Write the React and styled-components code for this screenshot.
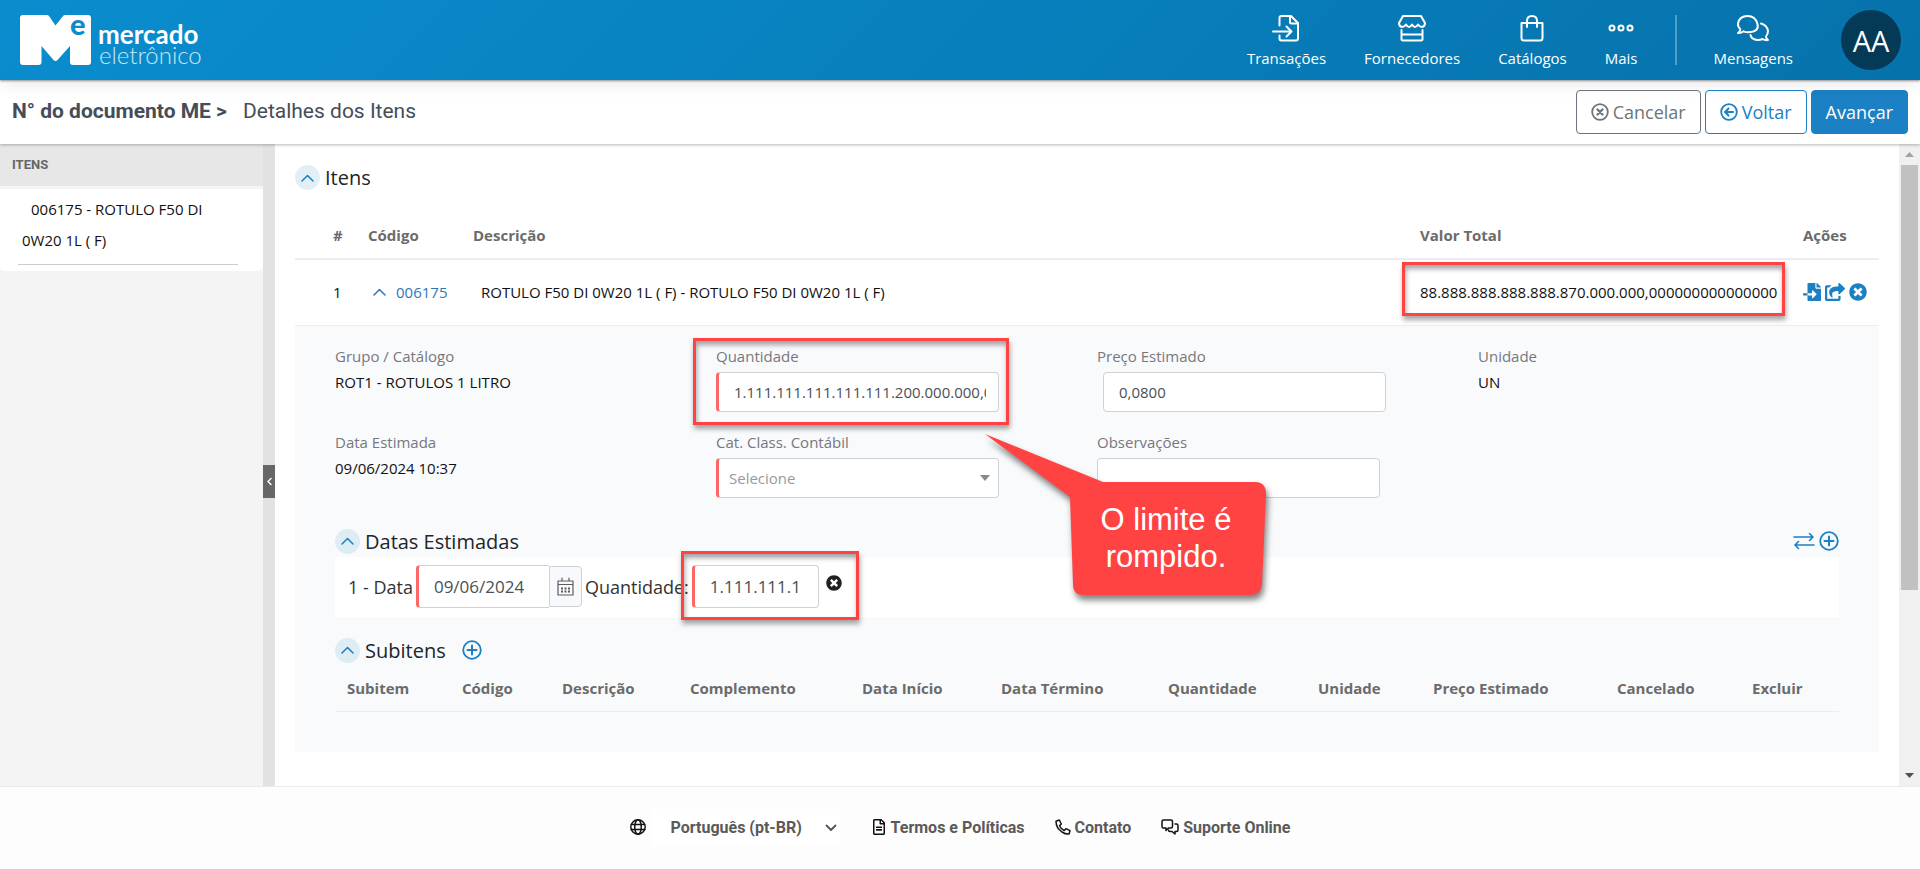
import React from "react";
import styled, { createGlobalStyle, css } from "styled-components";
import { FaFileImport, FaShareSquare, FaTimesCircle, FaRegFileAlt, FaChevronLeft } from "react-icons/fa";

const sans = '"Open Sans", "Noto Sans", sans-serif';
const roboto = 'Roboto, "Liberation Sans", sans-serif';
const blue = "#1b80c4";
const red = "#ff4343";

const GlobalStyle = createGlobalStyle`
  *, *::before, *::after { box-sizing: border-box; }
  body { margin: 0; font-family: ${sans}; font-size: 15px; color: #212529; background: #fff; }
  button, input, select { font-family: inherit; margin: 0; }
  svg { display: block; flex: none; }
`;

const Page = styled.div`
  min-height: 100vh;
  display: flex;
  flex-direction: column;
`;

/* ---------- Top bar ---------- */
const TopBar = styled.header`
  position: relative;
  z-index: 3;
  height: 80px;
  padding: 0 19px 0 20px;
  display: flex;
  align-items: center;
  justify-content: space-between;
  background: linear-gradient(135deg, #0a8dce, #0672ab);
  box-shadow: 0 1px 2px rgba(0, 0, 0, 0.4), 0 3px 16px rgba(0, 0, 0, 0.1);
`;
const Nav = styled.nav`
  display: flex;
  align-items: center;
  gap: 38px;
`;
const NavLink = styled.a`
  display: flex;
  flex-direction: column;
  align-items: center;
  gap: 6px;
  padding-top: 2px;
  color: #fff;
  font-size: 15px;
  line-height: 20px;
  text-decoration: none;
`;
const NavDivider = styled.span`
  width: 2px;
  height: 50px;
  margin-right: -2px;
  background: rgba(255, 255, 255, 0.3);
`;
const Avatar = styled.button`
  width: 60px;
  height: 60px;
  margin-left: 10px;
  padding: 0;
  border: 0;
  border-radius: 50%;
  background: #053a56;
  color: #fff;
  font-family: ${sans};
  font-size: 29px;
`;
const LogoSvg = styled.svg`
  overflow: visible;
  font-family: Lato, sans-serif;
`;

/* ---------- Title bar ---------- */
const TitleBar = styled.div`
  position: relative;
  z-index: 2;
  height: 64px;
  padding: 0 12px;
  display: flex;
  align-items: center;
  justify-content: space-between;
  background: #fff;
  box-shadow: 0 1px 3px rgba(0, 0, 0, 0.28);
`;
const Crumbs = styled.h1`
  margin: 0 0 2px;
  display: flex;
  gap: 16px;
  font: 400 21px/28px ${roboto};
  color: #454d59;
`;
const Actions = styled.div`
  display: flex;
  gap: 4px;
`;
const ActionButton = styled.button`
  height: 44px;
  padding: 0 14px;
  display: flex;
  align-items: center;
  gap: 4px;
  border: 1px solid ${(p) => p.$color};
  border-radius: 4px;
  background: ${(p) => (p.$filled ? p.$color : "#fff")};
  color: ${(p) => (p.$filled ? "#fff" : p.$color)};
  font-size: 18px;
`;

/* ---------- Body ---------- */
const Body = styled.div`
  flex: 1;
  display: flex;
`;
const Sidebar = styled.aside`
  width: 263px;
  background: #f4f4f4;
`;
const SideTitle = styled.h2`
  margin: 0 0 3px;
  padding: 0 12px;
  font: 700 13px/42px ${roboto};
  color: #666;
  background: #e7e7e7;
`;
const SideCard = styled.div`
  padding: 5px 25px 6px 18px;
  background: #fff;
  border-radius: 0 0 5px 5px;
`;
const SideLink = styled.a`
  display: block;
  padding: 0 4px 8px;
  border-bottom: 1px solid #ccc;
  color: #111;
  font-size: 15px;
  line-height: 31px;
  text-indent: 9px;
  text-decoration: none;
`;
const Splitter = styled.div`
  width: 12px;
  display: flex;
  align-items: center;
  background: #e2e2e2;
`;
const SplitterHandle = styled.button`
  width: 12px;
  height: 33px;
  margin-top: 32px;
  padding: 0;
  display: flex;
  align-items: center;
  justify-content: center;
  border: 0;
  background: #666;
  color: #fff;
`;
const Main = styled.main`
  flex: 1;
  min-width: 0;
  padding: 21px 20px 32px;
  background: #fff;
`;
const ScrollTrack = styled.div`
  width: 21px;
  display: flex;
  flex-direction: column;
  align-items: center;
  background: #f0f0f0;
`;
const ScrollArrow = styled.button`
  width: 18px;
  height: 21px;
  padding: 0;
  display: flex;
  align-items: center;
  justify-content: center;
  border: 0;
  background: none;
`;
const ScrollThumb = styled.div`
  width: 17px;
  flex: 424;
  background: #c1c1c1;
`;
const ScrollRest = styled.div`
  flex: 175;
`;

/* ---------- Sections ---------- */
const SectionHead = styled.div`
  height: 25px;
  display: flex;
  align-items: center;
  justify-content: space-between;
  margin: ${(p) => p.$m || "0"};
`;
const SectionTitle = styled.h3`
  margin: 0;
  display: flex;
  align-items: center;
  gap: 5px;
  font-size: 20px;
  font-weight: 400;
  line-height: 25px;
`;
const RoundToggle = styled.button`
  width: 25px;
  height: 25px;
  padding: 0;
  display: flex;
  align-items: center;
  justify-content: center;
  border: 0;
  border-radius: 50%;
  background: ${(p) => (p.$onGrey ? "#deecf3" : "#e2eff7")};
  color: ${blue};
`;
const IconButton = styled.button`
  padding: 0;
  display: inline-flex;
  border: 0;
  background: none;
  color: ${(p) => p.$color || blue};
  margin: ${(p) => p.$m || "0"};
`;
const IconGroup = styled.div`
  display: flex;
  align-items: center;
  gap: 4px;
`;

/* ---------- Items table ---------- */
const Table = styled.table`
  width: 100%;
  border-collapse: collapse;
  table-layout: fixed;
`;
const Th = styled.th`
  height: ${(p) => p.$h || "48px"};
  padding: 0 0 0 ${(p) => p.$pl || "0"};
  border-bottom: ${(p) => p.$line || "2px solid #ecedf4"};
  text-align: left;
  font-size: 15px;
  font-weight: 700;
  color: #6b6b6b;
  white-space: nowrap;
`;
const Td = styled.td`
  height: 66px;
  padding: 0 0 0 ${(p) => p.$pl || "0"};
  border-bottom: 1px solid #ecedef;
  color: #111;
  white-space: nowrap;
`;
const CodeLink = styled.a`
  display: flex;
  align-items: center;
  gap: 10px;
  color: #2f77b8;
  text-decoration: none;
`;
const DetailCell = styled.td`
  padding: 18px 40px 40px;
  background: #f9fafc;
`;

/* ---------- Fields ---------- */
const FieldGrid = styled.div`
  display: grid;
  grid-template-columns: repeat(4, 1fr);
  grid-auto-rows: 86px;
  margin-right: -20px;
`;
const Field = styled.div`
  display: flex;
  flex-direction: column;
  align-items: flex-start;
  position: relative;
`;
const labelText = css`
  color: #76787c;
  line-height: 24px;
`;
const Label = styled.label`
  ${labelText}
  margin-bottom: 4px;
`;
const ReadLabel = styled.span`
  ${labelText}
  margin-bottom: 2px;
`;
const ReadValue = styled.span`
  color: #111;
  line-height: 24px;
`;
const controlBase = css`
  height: 40px;
  border: 1px solid #ced1d5;
  border-radius: 4px;
  background: #fff;
  color: #495057;
  font-size: 15px;
  outline: 0;
  ${(p) => p.$required && css`border-left: 3px solid #ff6666;`}
`;
const Input = styled.input`
  ${controlBase}
  width: calc(100% - 98px);
  padding: 0 12px 0 15px;
  margin-left: ${(p) => p.$ml || "0"};
`;
const SelectWrap = styled.div`
  position: relative;
  width: calc(100% - 98px);
`;
const Select = styled.select`
  ${controlBase}
  width: 100%;
  padding: 0 10px;
  appearance: none;
  color: #999;
`;
const Caret = styled.span`
  position: absolute;
  right: 9px;
  top: 17px;
  border: 5px solid transparent;
  border-top: 6px solid #888;
  border-bottom: 0;
  pointer-events: none;
`;

const DateRow = styled.div`
  height: 60px;
  padding: 0 13px;
  display: flex;
  align-items: center;
  background: #fff;
  font-size: 18px;
  color: #333;
`;
const BigInput = styled.input`
  ${controlBase}
  width: ${(p) => p.$w};
  height: 43px;
  padding: 0 0 0 15px;
  font-size: 17px;
  ${(p) => p.$joined && css`border-right: 0; border-radius: 4px 0 0 4px;`}
`;
const CalendarButton = styled.button`
  width: 33px;
  height: 41px;
  margin-right: 3px;
  padding: 0;
  display: flex;
  align-items: center;
  justify-content: center;
  border: 1px solid #ced1d5;
  border-radius: 0 4px 4px 0;
  background: #f8f9fc;
  color: #5c5c5c;
`;
const RowLabel = styled.label`
  margin-right: 3px;
`;

/* ---------- Red annotations over the form ---------- */
const Anchor = styled.div`
  position: relative;
  display: flex;
  align-items: center;
`;
const Highlight = styled.span`
  position: absolute;
  inset: ${(p) => p.$inset};
  border: 3px solid ${red};
  box-shadow: 1px 4px 5px rgba(0, 0, 0, 0.35), inset 1px 4px 5px rgba(0, 0, 0, 0.35);
  pointer-events: none;
`;
const Callout = styled.div`
  position: absolute;
  z-index: 1;
  left: 269px;
  top: 90px;
  width: 282px;
  height: 162px;
  pointer-events: none;
  svg { position: absolute; inset: 0; overflow: visible; filter: drop-shadow(2px 5px 3px rgba(0, 0, 0, 0.5)); }
`;
const CalloutText = styled.p`
  position: absolute;
  left: 82px;
  right: 2px;
  top: 67px;
  margin: 0;
  text-align: center;
  color: #fff;
  font: 400 31px/37px "Liberation Sans", sans-serif;
`;

/* ---------- Footer ---------- */
const Footer = styled.footer`
  height: 83px;
  padding-bottom: 2px;
  display: flex;
  align-items: center;
  justify-content: center;
  gap: 30px;
  border-top: 1px solid #ebebeb;
  background: #fdfdfd;
  font-family: ${roboto};
  font-size: 16px;
`;
const LangWrap = styled.label`
  position: relative;
  display: flex;
  align-items: center;
  gap: 6px;
  color: #111;
`;
const LangSelect = styled.select`
  width: 189px;
  height: 36px;
  padding: 0 19px;
  border: 0;
  appearance: none;
  background: #fff;
  color: #5a5a5a;
  font-size: 16px;
  font-weight: 700;
`;
const LangChevron = styled.span`
  position: absolute;
  right: 4px;
  top: 15px;
  color: #555;
  pointer-events: none;
`;
const FooterLink = styled.a`
  display: flex;
  align-items: center;
  gap: 4px;
  color: #111;
  text-decoration: none;
  span { color: #5a5a5a; font-weight: 700; }
`;

/* ---------- Icons ---------- */
const Icon = ({ w = 24, h = w, box = `0 0 ${w} ${h}`, sw = 2, children }) => (
  <svg width={w} height={h} viewBox={box} fill="none" stroke="currentColor" strokeWidth={sw} strokeLinecap="round" strokeLinejoin="round" aria-hidden="true">
    {children}
  </svg>
);
const ChevronUp = () => <Icon w={13} h={8} sw={1.5}><path d="M1 7 6.500 1.500 12 7" /></Icon>;
const TransactionIcon = () => (
  <Icon w={28} h={28}>
    <path d="M7.500 11.500V4q0-2 2-2h9.500l7 7v15.500q0 2-2 2H9.500q-2 0-2-2v-3" />
    <path d="M18 2.500V8q0 1.500 1.500 1.500H25.500" />
    <path d="M1 17.500h18M14.500 12.500l5 5-5 5" />
  </Icon>
);
const StoreIcon = () => (
  <Icon w={30} h={28}>
    <path d="M6 2h18l4 7q0 3.500-3 4-2.500 0-4-2.500-1.500 2.500-3 2.500t-3-2.500q-1.500 2.500-3 2.500t-3-2.500q-1.500 2.500-4 2.500-3-.5-3-4z" />
    <path d="M4.500 16v9q0 1.500 1.500 1.500h18q1.500 0 1.500-1.500v-9M4.500 20.500h21" />
  </Icon>
);
const BagIcon = () => (
  <Icon w={26} h={28}>
    <path d="M2.500 9h21v15q0 2.500-2.500 2.500H5Q2.500 26.500 2.500 24zM8 13V7q0-5 5-5t5 5v6" />
  </Icon>
);
const DotsIcon = () => (
  <Icon w={26} h={28}>
    <circle cx="4" cy="14" r="2.500" /><circle cx="13" cy="14" r="2.500" /><circle cx="22" cy="14" r="2.500" />
  </Icon>
);
const ChatIcon = () => (
  <Icon w={34} h={28}>
    <path d="M2 19q2-1.500 2.300-3.700Q1.500 12 2 9.500 3.500 2 11.500 2T21.500 10t-9.500 8.300q-2.500 0-4.500-1Q5 19.300 2 19z" />
    <path d="M25 9.500q6 1.500 7 7.500 0 3-2 5.500 0 2 2 3.500-3 .5-5.500-1-2.500 1.200-5 1-6-.5-7-5" />
  </Icon>
);
const CircleX = () => (
  <Icon w={18}><circle cx="9" cy="9" r="7.800" strokeWidth="1.800" /><path d="m6.500 6.500 5 5m0-5-5 5" strokeWidth="2.400" /></Icon>
);
const CircleBack = () => (
  <Icon w={18}><circle cx="9" cy="9" r="7.800" strokeWidth="1.800" /><path d="M13 9H5.500M8.500 5.500 5 9l3.500 3.500" strokeWidth="2" /></Icon>
);
const CirclePlus = () => (
  <Icon w={20}><circle cx="10" cy="10" r="8.800" strokeWidth="1.800" /><path d="M10 5.500v9M5.500 10h9" /></Icon>
);
const SwapIcon = () => (
  <Icon w={22} h={18} sw={1.600}><path d="M1 5h19M16.500 1.500 20 5l-3.500 3.500M21 13H2M5.500 9.500 2 13l3.500 3.500" /></Icon>
);
const CalendarIcon = () => (
  <Icon w={17} h={19} sw={1.200}>
    <path d="M1 4h15v14H1zM1 7.500h15M5 1v3M12 1v3" />
    <path d="M4 11.500h2m1.500 0h2m1.500 0h2M4 14.500h2m1.500 0h2m1.500 0h2" strokeWidth="2" strokeLinecap="butt" />
  </Icon>
);
const GlobeIcon = () => (
  <Icon w={16} sw={1.500}><circle cx="8" cy="8" r="7.200" /><ellipse cx="8" cy="8" rx="3.300" ry="7.200" /><path d="M1.300 5.500h13.400M1.300 10.500h13.400" /></Icon>
);
const PhoneIcon = () => (
  <Icon w={16} sw={1.500}><path d="M1 2.300 4.300 1 6.300 5 4.500 6.800Q6 10 9.200 11.500L11 9.700l4 2-1 3.300Q11 15.500 7 13 1 9 1 2.300z" /></Icon>
);
const SupportIcon = () => (
  <Icon w={18} h={16} sw={1.500}>
    <path d="M2.500 1h7.500q1.500 0 1.500 1.500v5Q11.500 9 10 9H7.500L5 11.500V9H2.500Q1 9 1 7.500v-5Q1 1 2.500 1z" />
    <path d="M14 5h1.500Q17 5 17 6.500V11q0 1.500-1.500 1.500H14V15l-3-2.500H9Q7.500 12.500 7.500 11" />
  </Icon>
);
const Logo = () => (
  <LogoSvg width="184" height="56" viewBox="0 0 184 56" role="img" aria-label="mercado eletrônico">
    <path fill="#fff" d="M3 3h24q1 0 2 1l6.500 9.500L43 4q1-1 2-1h23q3 0 3 3v44q0 3-3 3H53q-3 0-3-3V34L37.500 48q-2 2-4 0L21.500 34v16q0 3-3 3H3q-3 0-3-3V6q0-3 3-3z" />
    <text x="50" y="23" fontWeight="900" fontSize="29" fill="#0a8bcb">e</text>
    <text x="78" y="32" fontWeight="700" fontSize="26" fill="#fff">mercado</text>
    <text x="79" y="52" fontWeight="300" fontSize="24" fill="#cde6f4">eletrônico</text>
  </LogoSvg>
);

const nav = [
  ["Transações", TransactionIcon],
  ["Fornecedores", StoreIcon],
  ["Catálogos", BagIcon],
  ["Mais", DotsIcon],
];
const subColumns = [
  ["Subitem", 115], ["Código", 100], ["Descrição", 128], ["Complemento", 172], ["Data Início", 139],
  ["Data Término", 167], ["Quantidade", 150], ["Unidade", 115], ["Preço Estimado", 184], ["Cancelado", 135], ["Excluir", 99],
];

export default function App() {
  return (
    <Page>
      <GlobalStyle />
      <TopBar>
        <Logo />
        <Nav>
          {nav.map(([name, Glyph]) => (
            <NavLink href="#" key={name}><Glyph />{name}</NavLink>
          ))}
          <NavDivider />
          <NavLink href="#"><ChatIcon />Mensagens</NavLink>
          <Avatar type="button">AA</Avatar>
        </Nav>
      </TopBar>

      <TitleBar>
        <Crumbs><b>N° do documento ME &gt;</b><span>Detalhes dos Itens</span></Crumbs>
        <Actions>
          <ActionButton type="button" $color="#6c757d"><CircleX />Cancelar</ActionButton>
          <ActionButton type="button" $color={blue}><CircleBack />Voltar</ActionButton>
          <ActionButton type="button" $color={blue} $filled>Avançar</ActionButton>
        </Actions>
      </TitleBar>

      <Body>
        <Sidebar>
          <SideTitle>ITENS</SideTitle>
          <SideCard><SideLink href="#">006175 - ROTULO F50 DI 0W20 1L ( F)</SideLink></SideCard>
        </Sidebar>
        <Splitter>
          <SplitterHandle type="button" aria-label="Recolher"><FaChevronLeft size={9} /></SplitterHandle>
        </Splitter>

        <Main>
          <SectionHead $m="0 0 21px">
            <SectionTitle><RoundToggle type="button" aria-label="Recolher itens"><ChevronUp /></RoundToggle>Itens</SectionTitle>
          </SectionHead>
          <Table>
            <colgroup>
              <col width="73" /><col width="105" /><col /><col width="383" /><col width="76" />
            </colgroup>
            <thead>
              <tr><Th $pl="38px">#</Th><Th>Código</Th><Th>Descrição</Th><Th>Valor Total</Th><Th>Ações</Th></tr>
            </thead>
            <tbody>
              <tr>
                <Td $pl="38px">1</Td>
                <Td $pl="5px"><CodeLink href="#"><ChevronUp />006175</CodeLink></Td>
                <Td $pl="8px">ROTULO F50 DI 0W20 1L ( F) - ROTULO F50 DI 0W20 1L ( F)</Td>
                <Td>
                  <Anchor>
                    88.888.888.888.888.870.000.000,000000000000000
                    <Highlight $inset="-20px 18px -14px -18px" />
                  </Anchor>
                </Td>
                <Td>
                  <IconGroup>
                    <IconButton type="button" aria-label="Importar"><FaFileImport size={18} /></IconButton>
                    <IconButton type="button" aria-label="Compartilhar"><FaShareSquare size={20} /></IconButton>
                    <IconButton type="button" aria-label="Remover"><FaTimesCircle size={18} /></IconButton>
                  </IconGroup>
                </Td>
              </tr>
              <tr>
                <DetailCell colSpan={5}>
                  <FieldGrid>
                    <Field><ReadLabel>Grupo / Catálogo</ReadLabel><ReadValue>ROT1 - ROTULOS 1 LITRO</ReadValue></Field>
                    <Field>
                      <Label htmlFor="qtd">Quantidade</Label>
                      <Input id="qtd" $required defaultValue="1.111.111.111.111.111.200.000.000,000000" />
                      <Highlight $inset="-6px 88px 5px -23px" />
                      <Callout>
                        <svg viewBox="0 0 282 162" width="282" height="162">
                          <path fill={red} d="M0 0 118 48H270q11 0 11 12l-4 90q-1 11-11 11H98q-10 0-10-11L85 63z" />
                        </svg>
                        <CalloutText>O limite é<br />rompido.</CalloutText>
                      </Callout>
                    </Field>
                    <Field><Label htmlFor="preco">Preço Estimado</Label><Input id="preco" $ml="6px" defaultValue="0,0800" /></Field>
                    <Field><ReadLabel>Unidade</ReadLabel><ReadValue>UN</ReadValue></Field>
                    <Field><ReadLabel>Data Estimada</ReadLabel><ReadValue>09/06/2024 10:37</ReadValue></Field>
                    <Field>
                      <Label htmlFor="cat">Cat. Class. Contábil</Label>
                      <SelectWrap><Select id="cat" $required><option>Selecione</option></Select><Caret /></SelectWrap>
                    </Field>
                    <Field><Label htmlFor="obs">Observações</Label><Input id="obs" /></Field>
                  </FieldGrid>

                  <SectionHead $m="13px 0 3px">
                    <SectionTitle><RoundToggle type="button" $onGrey aria-label="Recolher datas"><ChevronUp /></RoundToggle>Datas Estimadas</SectionTitle>
                    <IconGroup>
                      <IconButton type="button" aria-label="Alternar"><SwapIcon /></IconButton>
                      <IconButton type="button" aria-label="Adicionar data"><CirclePlus /></IconButton>
                    </IconGroup>
                  </SectionHead>
                  <DateRow>
                    <RowLabel htmlFor="data">1 - Data</RowLabel>
                    <BigInput id="data" $w="133px" $required $joined defaultValue="09/06/2024" />
                    <CalendarButton type="button" aria-label="Calendário"><CalendarIcon /></CalendarButton>
                    <RowLabel htmlFor="qtd1">Quantidade:</RowLabel>
                    <Anchor>
                      <BigInput id="qtd1" $w="127px" $required defaultValue="1.111.111.1" />
                      <IconButton type="button" $color="#212121" $m="0 0 7px 7px" aria-label="Remover data"><FaTimesCircle size={16} /></IconButton>
                      <Highlight $inset="-14px -17px -12px -11px" />
                    </Anchor>
                  </DateRow>

                  <SectionHead $m="21px 0 3px">
                    <SectionTitle>
                      <RoundToggle type="button" $onGrey aria-label="Recolher subitens"><ChevronUp /></RoundToggle>Subitens
                      <IconButton type="button" $m="0 0 0 11px" aria-label="Adicionar subitem"><CirclePlus /></IconButton>
                    </SectionTitle>
                  </SectionHead>
                  <Table>
                    <colgroup>{subColumns.map(([name, w]) => <col key={name} width={w} />)}</colgroup>
                    <thead>
                      <tr>{subColumns.map(([name]) => <Th key={name} $h="46px" $pl="12px" $line="1px solid #ecedef">{name}</Th>)}</tr>
                    </thead>
                  </Table>
                </DetailCell>
              </tr>
            </tbody>
          </Table>
        </Main>

        <ScrollTrack>
          <ScrollArrow type="button" aria-label="Subir"><svg width="9" height="5"><path d="M0 5 4.500 0 9 5z" fill="#a3a3a3" /></svg></ScrollArrow>
          <ScrollThumb />
          <ScrollRest />
          <ScrollArrow type="button" aria-label="Descer"><svg width="9" height="5"><path d="M0 0h9L4.500 5z" fill="#505050" /></svg></ScrollArrow>
        </ScrollTrack>
      </Body>

      <Footer>
        <LangWrap>
          <GlobeIcon />
          <LangSelect aria-label="Idioma"><option>Português (pt-BR)</option></LangSelect>
          <LangChevron><Icon w={12} h={8} sw={1.800}><path d="M1.500 1.500 6 6l4.500-4.500" /></Icon></LangChevron>
        </LangWrap>
        <FooterLink href="#"><FaRegFileAlt width={13} height={16} /><span>Termos e Políticas</span></FooterLink>
        <FooterLink href="#"><PhoneIcon /><span>Contato</span></FooterLink>
        <FooterLink href="#"><SupportIcon /><span>Suporte Online</span></FooterLink>
      </Footer>
    </Page>
  );
}
